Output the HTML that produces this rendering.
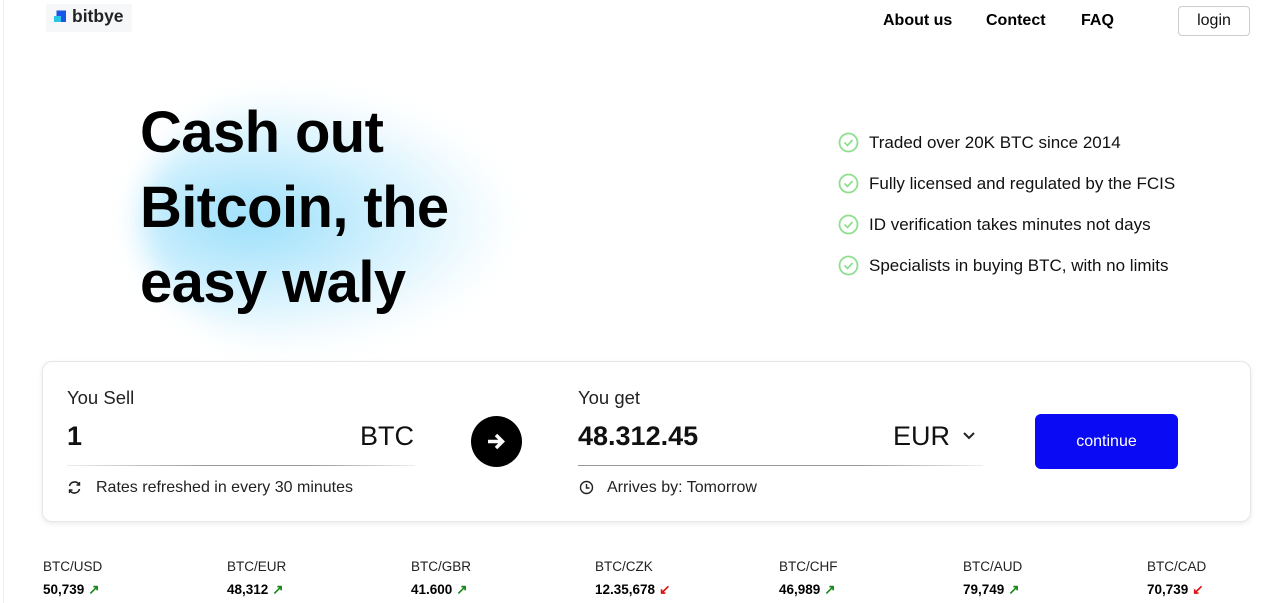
<!DOCTYPE html>
<html><head><meta charset="utf-8"><style>
*{margin:0;padding:0;box-sizing:border-box}
body{width:1280px;height:603px;overflow:hidden;background:#fff;font-family:"Liberation Sans",sans-serif;color:#111;position:relative}
.a{position:absolute}
.nav a{position:absolute;top:12px;font-size:16px;font-weight:bold;color:#000;text-decoration:none}
.glow{left:140px;top:90px;width:370px;height:260px;border-radius:50%;background:radial-gradient(ellipse at 30% 50%,rgba(130,215,250,.8) 0%,rgba(170,228,252,.5) 40%,rgba(255,255,255,0) 72%);filter:blur(14px)}
h1{position:absolute;left:140px;top:95px;font-size:58px;line-height:75px;font-weight:bold;color:#000;letter-spacing:-.6px}
.li{position:absolute;left:838px;font-size:17px;color:#111;display:flex;align-items:center}
.li svg{margin-right:10px}
.card{left:42px;top:361px;width:1209px;height:161px;border:1px solid #e6e6e6;border-radius:10px;box-shadow:0 2px 6px rgba(0,0,0,.08)}
.lab{font-size:18.5px;color:#222}
.big{font-size:27px;color:#111}
.sm{font-size:16px;color:#222}
.tk{position:absolute;top:559px;font-size:13.5px;color:#222}
.tk b{display:block;margin-top:8px;font-size:13.5px;color:#000}
.up{color:#1a8a1a;font-weight:bold;margin-left:4px}
.dn{color:#d11;font-weight:bold;margin-left:4px}
</style></head><body>
<div class="a" style="left:3px;top:0;width:1px;height:603px;background:#eee"></div>
<div class="a" style="left:46px;top:4px;width:86px;height:28px;background:#f5f7f9"></div>
<svg class="a" style="left:53px;top:9px" width="15" height="15" viewBox="0 0 15 15"><path d="M3.5 1.5h9.5v11.5H8V7H3.5z" fill="#1a56e8"/><rect x="1" y="7" width="7" height="6" fill="#27c6e6"/></svg>
<div class="a" style="left:72px;top:6px;font-size:17.5px;font-weight:bold;color:#222">bitbye</div>
<div class="nav"><a style="left:883px">About us</a><a style="left:986px">Contect</a><a style="left:1081px">FAQ</a></div>
<div class="a" style="left:1178px;top:6px;width:72px;height:30px;border:1px solid #ccc;border-radius:4px;font-size:16px;text-align:center;line-height:28px;color:#111">login</div>
<div class="a glow"></div>
<h1>Cash out<br>Bitcoin, the<br>easy waly</h1>
<div class="li" style="top:132px"><svg width="21" height="21" viewBox="0 0 21 21"><circle cx="10.5" cy="10.5" r="9" fill="none" stroke="#8ee08e" stroke-width="1.8"/><path d="M6.5 10.5l3 3 5-5.5" fill="none" stroke="#8ee08e" stroke-width="1.8"/></svg>Traded over 20K BTC since 2014</div>
<div class="li" style="top:173px"><svg width="21" height="21" viewBox="0 0 21 21"><circle cx="10.5" cy="10.5" r="9" fill="none" stroke="#8ee08e" stroke-width="1.8"/><path d="M6.5 10.5l3 3 5-5.5" fill="none" stroke="#8ee08e" stroke-width="1.8"/></svg>Fully licensed and regulated by the FCIS</div>
<div class="li" style="top:214px"><svg width="21" height="21" viewBox="0 0 21 21"><circle cx="10.5" cy="10.5" r="9" fill="none" stroke="#8ee08e" stroke-width="1.8"/><path d="M6.5 10.5l3 3 5-5.5" fill="none" stroke="#8ee08e" stroke-width="1.8"/></svg>ID verification takes minutes not days</div>
<div class="li" style="top:255px"><svg width="21" height="21" viewBox="0 0 21 21"><circle cx="10.5" cy="10.5" r="9" fill="none" stroke="#8ee08e" stroke-width="1.8"/><path d="M6.5 10.5l3 3 5-5.5" fill="none" stroke="#8ee08e" stroke-width="1.8"/></svg>Specialists in buying BTC, with no limits</div>
<div class="a card"></div>
<div class="a lab" style="left:67px;top:387px">You Sell</div>
<div class="a big" style="left:67px;top:421px;font-weight:bold">1</div>
<div class="a big" style="left:360px;top:421px">BTC</div>
<div class="a" style="left:67px;top:465px;width:348px;height:1px;background:linear-gradient(90deg,#eee,#999 40%,#999 70%,#eee)"></div>
<svg class="a" style="left:67px;top:480px" width="15" height="15" viewBox="0 0 15 15"><path d="M2.5 6A5.2 5.2 0 0 1 12 4.5M12.5 9A5.2 5.2 0 0 1 3 10.5" fill="none" stroke="#222" stroke-width="1.6"/><path d="M12.5 2v3h-3M2.5 13v-3h3" fill="none" stroke="#222" stroke-width="1.4"/></svg>
<div class="a sm" style="left:96px;top:479px">Rates refreshed in every 30 minutes</div>
<div class="a" style="left:471px;top:416px;width:51px;height:51px;border-radius:50%;background:#000"></div>
<svg class="a" style="left:484px;top:429px" width="25" height="25" viewBox="0 0 25 25"><path d="M4 12.5h14M12 6l6.5 6.5L12 19" fill="none" stroke="#fff" stroke-width="3.5"/></svg>
<div class="a lab" style="left:578px;top:387px">You get</div>
<div class="a big" style="left:578px;top:421px;font-weight:bold">48.312.45</div>
<div class="a big" style="left:893px;top:421px">EUR</div>
<svg class="a" style="left:961px;top:430px" width="16" height="12" viewBox="0 0 16 12"><path d="M3 3l5 5 5-5" fill="none" stroke="#222" stroke-width="2"/></svg>
<div class="a" style="left:578px;top:465px;width:405px;height:1px;background:linear-gradient(90deg,#999,#999 70%,#eee)"></div>
<svg class="a" style="left:579px;top:480px" width="15" height="15" viewBox="0 0 15 15"><circle cx="7.5" cy="7.5" r="6" fill="none" stroke="#222" stroke-width="1.4"/><path d="M7.5 4v4h3" fill="none" stroke="#222" stroke-width="1.4"/></svg>
<div class="a sm" style="left:607px;top:479px">Arrives by: Tomorrow</div>
<div class="a" style="left:1035px;top:414px;width:143px;height:55px;background:#0a0af5;border-radius:6px;color:#fff;font-size:16px;text-align:center;line-height:55px">continue</div>
<div class="tk" style="left:43px">BTC/USD<b>50,739<span class="up">↗</span></b></div>
<div class="tk" style="left:227px">BTC/EUR<b>48,312<span class="up">↗</span></b></div>
<div class="tk" style="left:411px">BTC/GBR<b>41.600<span class="up">↗</span></b></div>
<div class="tk" style="left:595px">BTC/CZK<b>12.35,678<span class="dn">↙</span></b></div>
<div class="tk" style="left:779px">BTC/CHF<b>46,989<span class="up">↗</span></b></div>
<div class="tk" style="left:963px">BTC/AUD<b>79,749<span class="up">↗</span></b></div>
<div class="tk" style="left:1147px">BTC/CAD<b>70,739<span class="dn">↙</span></b></div>
</body></html>
